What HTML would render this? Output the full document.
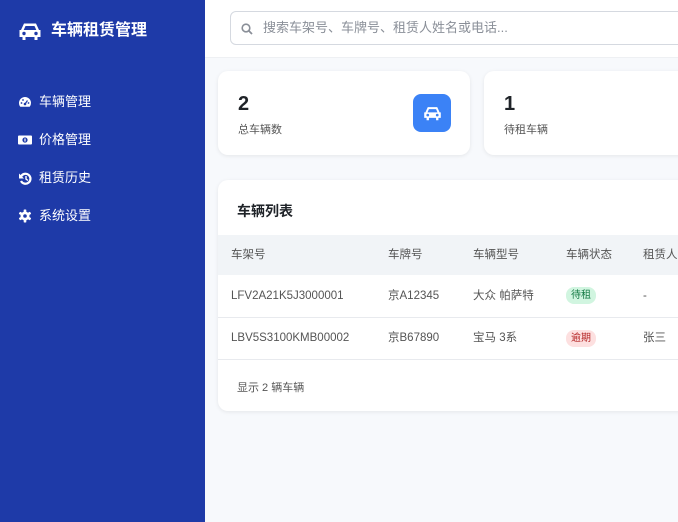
<!DOCTYPE html>
<html><head><meta charset="utf-8"><style>
*{box-sizing:border-box;margin:0;padding:0}
body{width:678px;height:522px;overflow:hidden;background:#f7f9fc;font-family:"Liberation Sans","Noto Sans CJK SC",sans-serif;position:relative}
.sb{position:absolute;left:0;top:0;width:205px;height:522px;background:#1e3aa8;color:#fff}
.logo{position:absolute;left:18px;top:20px;font-size:16px;font-weight:bold;display:flex;align-items:center;gap:9px;line-height:22px}
.nav{position:absolute;left:18px;font-size:13px;display:flex;align-items:center;gap:7px;line-height:18px}
.nav svg{flex:none}
.top{position:absolute;left:205px;top:0;right:0;height:58px;background:#fff;border-bottom:1px solid #eef0f3}
.search{position:absolute;left:25px;top:11px;width:470px;height:34px;border:1px solid #d5d9e0;border-radius:6px;font-size:13px;color:#8a8f98;padding:0 0 0 32px;line-height:32px}
.card{position:absolute;background:#fff;border-radius:10px;box-shadow:0 1px 4px rgba(0,0,0,.08)}
.num{position:absolute;left:20px;top:22px;font-size:20px;font-weight:bold;color:#1f2328}
.lbl{position:absolute;left:20px;top:50px;font-size:11px;color:#555}
td,th{font-size:11.5px;color:#555;text-align:left;font-weight:normal;padding-left:13px;vertical-align:middle;line-height:16px}
.tag{font-size:10px;padding:2px 5px;border-radius:8px;display:inline-block;line-height:13px}
</style></head><body>
<div class="sb">
<div class="logo"><svg width="24" height="19" viewBox="0 0 24 19"><path d="M6 1.5h12l3 6.5h1.5v7h-3v3h-3v-3h-9v3h-3v-3h-3v-7H3z" fill="#fff"/><path d="M7.5 4h9l1.8 4H5.7z" fill="#1e3aa8"/><circle cx="6" cy="11.5" r="1.7" fill="#1e3aa8"/><circle cx="18" cy="11.5" r="1.7" fill="#1e3aa8"/></svg>车辆租赁管理</div>
<div class="nav" style="top:93px"><svg width="14" height="12" viewBox="0 0 14 12"><path d="M7 1a6 6 0 0 0-6 6c0 1.5.5 2.8 1.3 3.8h9.4A6 6 0 0 0 13 7a6 6 0 0 0-6-6z" fill="#fff"/><circle cx="7" cy="8" r="1.3" fill="#1e3aa8"/><path d="M7 8l2.5-3.5" stroke="#1e3aa8" stroke-width="1.2"/><circle cx="3.5" cy="7" r=".9" fill="#1e3aa8"/><circle cx="5" cy="4" r=".9" fill="#1e3aa8"/><circle cx="10.5" cy="7" r=".9" fill="#1e3aa8"/></svg>车辆管理</div>
<div class="nav" style="top:131px"><svg width="14" height="10" viewBox="0 0 14 10"><rect x="0" y="0.5" width="14" height="9" rx="1" fill="#fff"/><circle cx="7" cy="5" r="2.6" fill="#1e3aa8"/><rect x="6.4" y="3.5" width="1.2" height="3" fill="#fff"/></svg>价格管理</div>
<div class="nav" style="top:169px"><svg width="14" height="13" viewBox="0 0 14 13"><path d="M3 4.5A5 5 0 1 1 3 9" stroke="#fff" stroke-width="2.2" fill="none"/><path d="M1 1.5v5h5z" fill="#fff"/><path d="M8 4v3l2 1.5" stroke="#fff" stroke-width="1.4" fill="none"/></svg>租赁历史</div>
<div class="nav" style="top:207px"><svg width="14" height="14" viewBox="0 0 14 14"><g fill="#fff"><circle cx="7" cy="7" r="4.5"/><rect x="5.7" y="0.5" width="2.6" height="13" rx=".6"/><rect x="5.7" y="0.5" width="2.6" height="13" rx=".6" transform="rotate(60 7 7)"/><rect x="5.7" y="0.5" width="2.6" height="13" rx=".6" transform="rotate(120 7 7)"/></g><circle cx="7" cy="7" r="1.8" fill="#1e3aa8"/></svg>系统设置</div>
</div>
<div class="top"><div class="search"><svg style="position:absolute;left:10px;top:11px" width="12" height="12" viewBox="0 0 12 12"><circle cx="5" cy="5" r="3.8" stroke="#8a8f98" stroke-width="1.6" fill="none"/><path d="M8 8l3 3" stroke="#8a8f98" stroke-width="1.8"/></svg>搜索车架号、车牌号、租赁人姓名或电话...</div></div>
<div class="card" style="left:218px;top:71px;width:252px;height:84px"><div class="num">2</div><div class="lbl">总车辆数</div>
<div style="position:absolute;left:195px;top:23px;width:38px;height:38px;background:#3b82f6;border-radius:8px"><svg width="19" height="15" viewBox="0 0 24 19" style="margin:12px 9.5px"><path d="M6 1.5h12l3 6.5h1.5v7h-3v3h-3v-3h-9v3h-3v-3h-3v-7H3z" fill="#fff"/><path d="M7.5 4h9l1.8 4H5.7z" fill="#3b82f6"/><circle cx="6" cy="11.5" r="1.7" fill="#3b82f6"/><circle cx="18" cy="11.5" r="1.7" fill="#3b82f6"/></svg></div></div>
<div class="card" style="left:484px;top:71px;width:220px;height:84px"><div class="num">1</div><div class="lbl">待租车辆</div></div>
<div class="card" style="left:218px;top:180px;width:480px;height:231px">
<div style="position:absolute;left:19px;top:21px;font-size:14px;font-weight:bold;color:#1f2328">车辆列表</div>
<table style="position:absolute;top:55px;left:0;width:480px;border-collapse:collapse">
<tr style="background:#f1f4f7;height:40px"><th style="width:157px">车架号</th><th style="width:85px">车牌号</th><th style="width:93px">车辆型号</th><th style="width:77px">车辆状态</th><th>租赁人</th></tr>
<tr style="height:42px;border-bottom:1px solid #e8eaee"><td>LFV2A21K5J3000001</td><td>京A12345</td><td>大众 帕萨特</td><td><span class="tag" style="background:#d1f5e0;color:#157a45">待租</span></td><td>-</td></tr>
<tr style="height:42px;border-bottom:1px solid #e8eaee"><td>LBV5S3100KMB00002</td><td>京B67890</td><td>宝马 3系</td><td><span class="tag" style="background:#fde0e0;color:#b42323">逾期</span></td><td>张三</td></tr>
</table>
<div style="position:absolute;left:19px;top:199px;font-size:11px;color:#555">显示 2 辆车辆</div>
</div>
</body></html>
